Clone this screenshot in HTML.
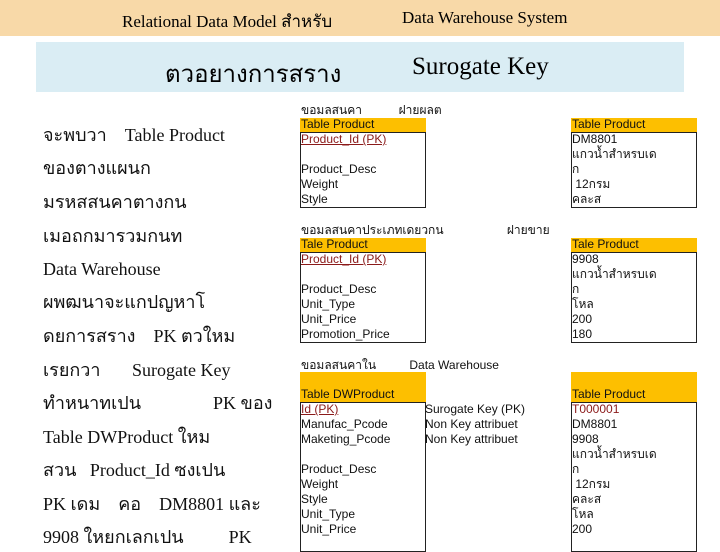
<!DOCTYPE html>
<html><head><meta charset="utf-8"><style>
*{margin:0;padding:0}
body{width:720px;height:540px;overflow:hidden;background:#fff;position:relative;font-family:"Liberation Serif","Noto Serif CJK SC",serif}
.a{position:absolute;white-space:pre}
.l{position:absolute;left:43px;font-size:18px;line-height:20px;white-space:pre;color:#111}
.s{position:absolute;font-family:"Liberation Sans","Noto Sans CJK SC",sans-serif;font-size:12px;line-height:15px;white-space:pre;color:#111}
.h{position:absolute;background:#fdbf00}
.b{position:absolute;border:1px solid #222;box-sizing:border-box}
.r{color:#8b1a1a}
.u{text-decoration:underline}
</style></head><body>
<div class="a" style="left:0;top:0;width:720px;height:36px;background:#f8d9a8"></div>
<div class="a" style="left:122px;top:8px;font-size:17px">Relational Data Model สำหรับ</div>
<div class="a" style="left:402px;top:8px;font-size:17px">Data Warehouse System</div>
<div class="a" style="left:36px;top:42px;width:648px;height:50px;background:#daedf4"></div>
<div class="a" style="left:165px;top:54px;font-size:24px">ตวอยางการสราง</div>
<div class="a" style="left:412px;top:53px;font-size:25px">Surogate Key</div>

<div class="l" style="top:125px">จะพบวา    Table Product</div>
<div class="l" style="top:158px">ของตางแผนก</div>
<div class="l" style="top:192px">มรหสสนคาตางกน</div>
<div class="l" style="top:226px">เมอถกมารวมกนท</div>
<div class="l" style="top:259px">Data Warehouse</div>
<div class="l" style="top:292px">ผพฒนาจะแกปญหาโ</div>
<div class="l" style="top:326px">ดยการสราง    PK ตวใหม</div>
<div class="l" style="top:360px">เรยกวา       Surogate Key</div>
<div class="l" style="top:393px">ทำหนาทเปน                PK ของ</div>
<div class="l" style="top:427px">Table DWProduct ใหม</div>
<div class="l" style="top:460px">สวน   Product_Id ซงเปน</div>
<div class="l" style="top:494px">PK เดม    คอ    DM8801 และ</div>
<div class="l" style="top:527px">9908 ใหยกเลกเปน          PK</div>

<!-- table 1 -->
<div class="s" style="left:301px;top:103px">ขอมลสนคา           ฝายผลต</div>
<div class="h" style="left:300px;top:118px;width:126px;height:14px"></div>
<div class="s" style="left:301px;top:117px">Table Product</div>
<div class="b" style="left:300px;top:132px;width:126px;height:76px"></div>
<div class="s" style="left:301px;top:132px"><span class="r u">Product_Id (PK)</span>

Product_Desc
Weight
Style</div>
<div class="h" style="left:571px;top:118px;width:126px;height:14px"></div>
<div class="s" style="left:572px;top:117px">Table Product</div>
<div class="b" style="left:571px;top:132px;width:126px;height:76px"></div>
<div class="s" style="left:572px;top:132px">DM8801
แกวน้ำสำหรบเด
ก
 12กรม
คละส</div>

<!-- table 2 -->
<div class="s" style="left:301px;top:223px">ขอมลสนคาประเภทเดยวกน                   ฝายขาย</div>
<div class="h" style="left:300px;top:238px;width:126px;height:14px"></div>
<div class="s" style="left:301px;top:237px">Tale Product</div>
<div class="b" style="left:300px;top:252px;width:126px;height:91px"></div>
<div class="s" style="left:301px;top:252px"><span class="r u">Product_Id (PK)</span>

Product_Desc
Unit_Type
Unit_Price
Promotion_Price</div>
<div class="h" style="left:571px;top:238px;width:126px;height:14px"></div>
<div class="s" style="left:572px;top:237px">Tale Product</div>
<div class="b" style="left:571px;top:252px;width:126px;height:91px"></div>
<div class="s" style="left:572px;top:252px">9908
แกวน้ำสำหรบเด
ก
โหล
200
180</div>

<!-- table 3 -->
<div class="s" style="left:301px;top:358px">ขอมลสนคาใน          Data Warehouse</div>
<div class="h" style="left:300px;top:372px;width:126px;height:30px"></div>
<div class="s" style="left:301px;top:387px">Table DWProduct</div>
<div class="b" style="left:300px;top:402px;width:126px;height:150px"></div>
<div class="s" style="left:301px;top:402px"><span class="r u">Id (PK)</span>
Manufac_Pcode
Maketing_Pcode

Product_Desc
Weight
Style
Unit_Type
Unit_Price</div>
<div class="s" style="left:425px;top:402px">Surogate Key (PK)
Non Key attribuet
Non Key attribuet</div>
<div class="h" style="left:571px;top:372px;width:126px;height:30px"></div>
<div class="s" style="left:572px;top:387px">Table Product</div>
<div class="b" style="left:571px;top:402px;width:126px;height:150px"></div>
<div class="s" style="left:572px;top:402px"><span class="r">T000001</span>
DM8801
9908
แกวน้ำสำหรบเด
ก
 12กรม
คละส
โหล
200</div>
</body></html>
